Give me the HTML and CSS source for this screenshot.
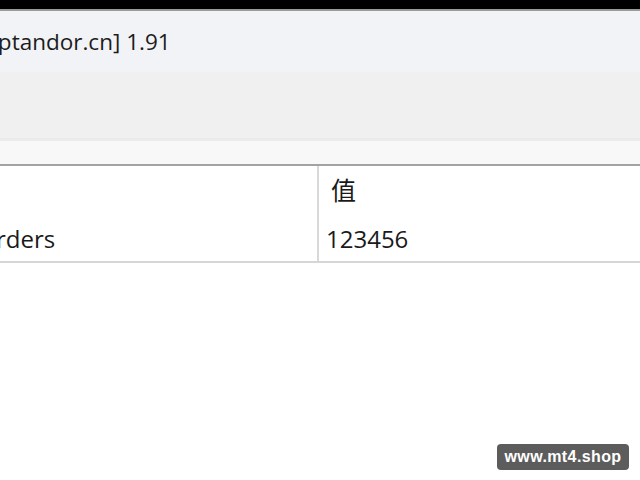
FILE: index.html
```html
<!DOCTYPE html>
<html>
<head>
<meta charset="utf-8">
<link rel="stylesheet" href="styles.css">
</head>
<body>
<div class="screen">
  <div class="topbar"></div>
  <div class="window">
    <div class="title"><span class="title-text">[Optandor.cn] 1.91</span></div>
    <div class="toolbar"></div>
    <div class="strip"></div>
    <div class="table">
      <div class="row head">
        <div class="cell c1"></div>
        <div class="cell c2"><span class="zh">值</span></div>
      </div>
      <div class="row">
        <div class="cell c1"><span class="name">rders</span></div>
        <div class="cell c2">123456</div>
      </div>
    </div>
    <div class="rest"></div>
  </div>
  <div class="badge">www.mt4.shop</div>
</div>
</body>
</html>
```
FILE: styles.css
```css
html, body {
  margin: 0;
  padding: 0;
  width: 640px;
  height: 480px;
  overflow: hidden;
  background: #ffffff;
}
.screen {
  position: relative;
  width: 640px;
  height: 480px;
  display: flex;
  flex-direction: column;
  font-family: "Open Sans", "Noto Sans CJK SC", sans-serif;
  color: #1a1a1a;
}
.topbar {
  height: 9px;
  background: #000000;
  border-bottom: 2px solid #9a9a9a;
}
.window {
  flex: 1;
  display: flex;
  flex-direction: column;
}
.title {
  height: 61px;
  background: #f2f3f6;
  overflow: hidden;
  display: flex;
  align-items: center;
  white-space: nowrap;
}
.title-text {
  font-size: 22.5px;
  margin-left: -27px;
  margin-top: -1px;
  color: #1c1c1c;
}
.toolbar {
  height: 66px;
  background: #f0f0f0;
  border-bottom: 3px solid #ebebeb;
}
.strip {
  height: 23px;
  background: #f8f8f8;
  border-bottom: 2px solid #a2a2a2;
}
.table {
  display: flex;
  flex-direction: column;
  border-bottom: 2px solid #d6d6d6;
}
.row {
  display: flex;
  height: 47px;
}
.head {
  height: 48px;
}
.cell {
  display: flex;
  align-items: center;
  font-size: 24px;
}
.c1 {
  width: 317px;
  border-right: 2px solid #d8d8d8;
  overflow: hidden;
  white-space: nowrap;
}
.c2 {
  flex: 1;
  padding-left: 7px;
  padding-top: 2px;
}
.name {
  margin-left: -4px;
  margin-top: 2px;
}
.zh {
  margin-left: 5px;
  font-size: 25px;
  margin-top: -4px;
}
.rest {
  flex: 1;
}
.badge {
  position: absolute;
  left: 497px;
  top: 444px;
  width: 132px;
  height: 26px;
  border-radius: 4px;
  background: #5c5c5c;
  color: #ffffff;
  font-family: "Liberation Sans", Arial, sans-serif;
  font-weight: bold;
  font-size: 16px;
  display: flex;
  align-items: center;
  justify-content: center;
  letter-spacing: 0.4px;
}
```
